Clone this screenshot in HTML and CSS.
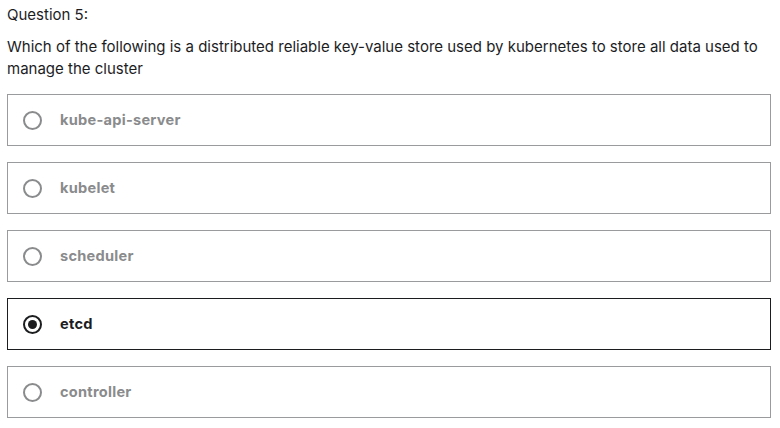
FILE: index.html
```html
<!DOCTYPE html>
<html>
<head>
<meta charset="utf-8">
<link rel="stylesheet" href="styles.css">
</head>
<body>
<div class="quiz">
  <div class="qnum">Question 5:</div>
  <div class="prompt">Which of the following is a distributed reliable key-value store used by kubernetes to store all data used to manage the cluster</div>
  <div class="options">
    <label class="opt"><span class="radio"></span><span class="text">kube-api-server</span></label>
    <label class="opt"><span class="radio"></span><span class="text">kubelet</span></label>
    <label class="opt"><span class="radio"></span><span class="text">scheduler</span></label>
    <label class="opt selected"><span class="radio"></span><span class="text">etcd</span></label>
    <label class="opt"><span class="radio"></span><span class="text">controller</span></label>
  </div>
</div>
</body>
</html>
```
FILE: styles.css
```css
html, body { margin: 0; padding: 0; background: #fff; }
body { font-family: "Inter", "Liberation Sans", sans-serif; color: #1c1d1f; }
.quiz { padding: 4px 9px 0 7px; }
.qnum { font-size: 15px; line-height: 22px; color: #1c1d1f; }
.prompt { font-size: 15px; line-height: 22px; margin-top: 10px; }
.options { display: flex; flex-direction: column; gap: 16px; margin-top: 14px; }
.opt { display: flex; align-items: center; height: 52px; box-sizing: border-box; border: 1px solid #9a9b9d; padding-left: 15px; }
.radio { width: 19px; height: 19px; border: 2px solid #8a8b8d; border-radius: 50%; box-sizing: border-box; display: flex; align-items: center; justify-content: center; margin-right: 18px; }
.text { font-weight: 700; font-size: 14.6px; letter-spacing: 0.25px; color: #8a8b8d; }
.selected { border-color: #1c1d1f; }
.selected .radio { border-color: #1c1d1f; }
.selected .radio::after { content: ""; width: 9px; height: 9px; border-radius: 50%; background: #1c1d1f; }
.selected .text { color: #1c1d1f; }
```
